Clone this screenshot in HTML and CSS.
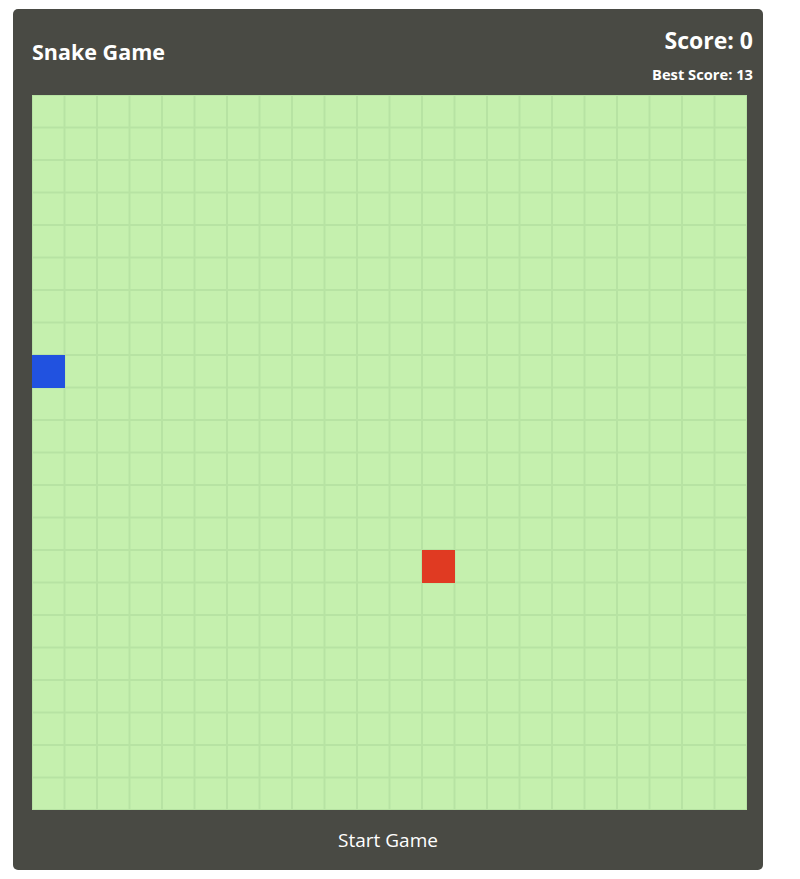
FILE: index.html
```html
<!DOCTYPE html>
<html lang="en">
<head>
<meta charset="utf-8">
<title>Snake Game</title>
<link rel="stylesheet" href="styles.css">
</head>
<body>
<div class="game">
  <header class="game-header">
    <h1 class="title">Snake Game</h1>
    <div class="scores">
      <div class="score">Score: 0</div>
      <div class="best">Best Score: 13</div>
    </div>
  </header>
  <div class="board">
    <div class="snake"></div>
    <div class="food"></div>
  </div>
  <button class="start">Start Game</button>
</div>
</body>
</html>
```

FILE: styles.css
```css
html, body {
  margin: 0;
  padding: 0;
  background: #ffffff;
}

body {
  font-family: "Open Sans", "Noto Sans", sans-serif;
}

.game {
  margin: 9px 0 0 13px;
  width: 750px;
  height: 861px;
  box-sizing: border-box;
  background: #494a44;
  border-radius: 5px;
  padding: 0 10px 0 19px;
  display: flex;
  flex-direction: column;
}

.game-header {
  height: 86px;
  display: flex;
  justify-content: space-between;
  align-items: flex-start;
  color: #ffffff;
}

.title {
  margin: 29px 0 0 0;
  font-size: 21.5px;
  font-weight: 700;
  line-height: 28px;
}

.scores {
  display: flex;
  flex-direction: column;
  align-items: flex-end;
  padding-top: 16px;
}

.score {
  font-size: 23px;
  font-weight: 700;
  line-height: 30px;
}

.best {
  margin-top: 10px;
  font-size: 14.7px;
  font-weight: 700;
  line-height: 18px;
}

.board {
  width: 715px;
  height: 715px;
  background-color: #c5f0ae;
  background-image:
    linear-gradient(to right, #b7e3a3 0 1px, transparent 1px 31.5px, #b7e3a3 31.5px),
    linear-gradient(to bottom, #b7e3a3 0 1px, transparent 1px 31.5px, #b7e3a3 31.5px);
  background-size: 32.5px 32.5px;
  display: grid;
  grid-template-columns: repeat(22, 1fr);
  grid-template-rows: repeat(22, 1fr);
}

.snake {
  grid-column: 1;
  grid-row: 9;
  background: #2152e0;
}

.food {
  grid-column: 13;
  grid-row: 15;
  background: #e03a22;
}

.start {
  flex: 1;
  width: 750px;
  margin-left: -19px;
  border: none;
  background: transparent;
  color: #ffffff;
  font-family: "Open Sans", "Noto Sans", sans-serif;
  font-size: 19px;
  font-weight: 500;
  padding: 0;
  cursor: pointer;
}
```
